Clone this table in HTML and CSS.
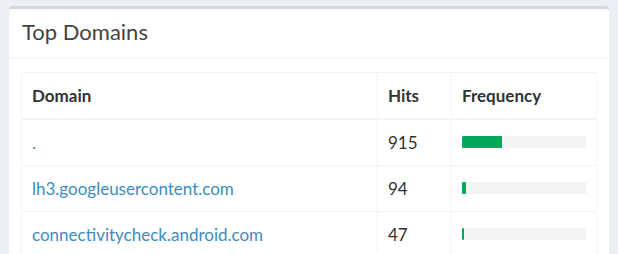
FILE: index.html
```html
<!DOCTYPE html>
<html>
<head>
<meta charset="utf-8">
<title>Top Domains</title>
<link rel="stylesheet" href="styles.css">
</head>
<body>
<div class="box">
  <div class="box-header">
    <h3 class="box-title">Top Domains</h3>
  </div>
  <div class="box-body">
    <table class="table">
      <colgroup>
        <col class="col-domain">
        <col class="col-hits">
        <col class="col-freq">
      </colgroup>
      <thead>
        <tr><th>Domain</th><th>Hits</th><th>Frequency</th></tr>
      </thead>
      <tbody>
        <tr>
          <td><a href="#">.</a></td>
          <td>915</td>
          <td><div class="progress"><div class="progress-bar" style="width:32.5%"></div></div></td>
        </tr>
        <tr>
          <td><a href="#">lh3.googleusercontent.com</a></td>
          <td>94</td>
          <td><div class="progress"><div class="progress-bar" style="width:3.34%"></div></div></td>
        </tr>
        <tr>
          <td><a href="#">connectivitycheck.android.com</a></td>
          <td>47</td>
          <td><div class="progress"><div class="progress-bar" style="width:1.67%"></div></div></td>
        </tr>
      </tbody>
    </table>
  </div>
</div>
</body>
</html>
```
FILE: styles.css
```css
html, body {
  margin: 0;
  padding: 0;
}
body {
  background: #ecf0f5;
  font-family: Lato, "Source Sans Pro", "Helvetica Neue", Arial, sans-serif;
  font-size: 17px;
  color: #333;
  padding: 6px 9px 0 9px;
}
.box {
  background: #fff;
  border-top: 3px solid #d2d6de;
  border-radius: 4px;
  box-shadow: 0 1px 1px rgba(0, 0, 0, 0.1);
  width: 600px;
}
.box-header {
  padding: 10px 13px 14px 13px;
  border-bottom: 1px solid #f4f4f4;
}
.box-title {
  margin: 0;
  font-size: 22px;
  line-height: 25px;
  font-weight: 400;
  color: #444;
}
.box-body {
  padding: 13px 13px 12px 12px;
}
.table {
  width: 575px;
  table-layout: fixed;
  border-collapse: collapse;
  border: 1px solid #f4f4f4;
}
.col-domain { width: 356px; }
.col-hits { width: 74px; }
.col-freq { width: 145px; }
.table th,
.table td {
  border: 1px solid #f4f4f4;
  padding: 10px 10px;
  line-height: 25px;
  text-align: left;
  vertical-align: top;
  white-space: nowrap;
}
.table th {
  font-weight: 700;
  border-bottom-width: 2px;
}
.table a {
  color: #3c8dbc;
  text-decoration: none;
}
.progress {
  height: 12px;
  margin: 6px 0 7px 0;
  background: #f4f4f4;
  border-radius: 1px;
  overflow: hidden;
}
.progress-bar {
  height: 100%;
  background: #00a65a;
  border-radius: 1px;
}
```
